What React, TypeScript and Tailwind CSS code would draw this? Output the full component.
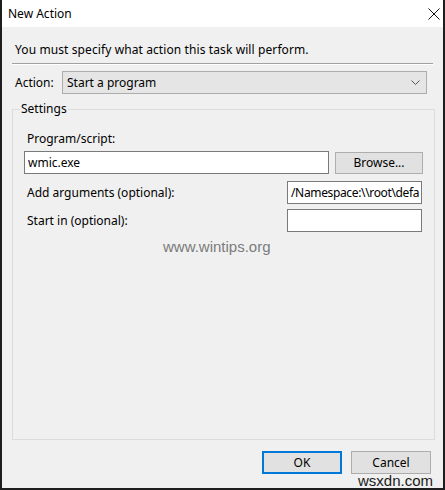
import React from 'react';

const ui = { fontFamily: '"Segoe UI", "Noto Sans", "Liberation Sans", sans-serif' };

function CloseIcon() {
  return (
    <svg width="12" height="12" viewBox="0 0 12 12" className="block">
      <path d="M0.5 0.5 L11.5 11.5 M11.5 0.5 L0.5 11.5" stroke="#111" strokeWidth="1" fill="none" />
    </svg>
  );
}

function Chevron() {
  return (
    <svg width="9" height="6" viewBox="0 0 9 6" className="block">
      <path d="M0.5 0.5 L4.5 4.5 L8.5 0.5" stroke="#555" strokeWidth="1" fill="none" />
    </svg>
  );
}

function TextBox({ value, className }: { value?: string; className: string }) {
  return (
    <div
      className={`h-[23px] bg-white border border-[#7a7a7a] flex items-center px-[3px] overflow-hidden whitespace-nowrap text-[12px] text-black ${className}`}
    >
      {value}
    </div>
  );
}

function Button({ label, primary, className }: { label: string; primary?: boolean; className: string }) {
  return (
    <div
      className={`h-[22px] flex items-center justify-center text-[12px] text-black bg-[#e1e1e1] ${
        primary ? 'border-2 border-[#0078d7]' : 'border border-[#adadad]'
      } ${className}`}
    >
      {label}
    </div>
  );
}

export default function App() {
  return (
    <div
      style={ui}
      className="w-[445px] h-[490px] flex flex-col bg-[#f0f0f0] border-x-2 border-b-2 border-[#1e1e1e] overflow-hidden text-[12px] text-black"
    >
      {/* Title bar */}
      <div className="h-[27px] bg-white flex items-center justify-between pl-[6px] pr-[3px] shrink-0">
        <span className="text-[12px] leading-none">New Action</span>
        <CloseIcon />
      </div>

      <div className="flex-1 flex flex-col px-[10px]">
        <p className="mt-[15px] pl-[3px] leading-[16px] tracking-[0.1px]">
          You must specify what action this task will perform.
        </p>
        <div className="mt-[5px] h-[2px] border-t border-[#a0a0a0] border-b border-b-white" />

        {/* Action picker */}
        <div className="mt-[6px] flex items-center">
          <span className="pl-[3px] w-[50px]">Action:</span>
          <div className="w-[365px] h-[23px] bg-[#e5e5e5] border border-[#adadad] flex items-center justify-between pl-[4px] pr-[6px]">
            <span>Start a program</span>
            <Chevron />
          </div>
        </div>

        {/* Settings group */}
        <fieldset className="mt-[8px] h-[338px] border border-[#dcdcdc] px-[11px] pb-0">
          <legend className="-ml-[4px] px-[1px] leading-[14px]">Settings</legend>

          <div className="mt-[15px] pl-[3px] leading-[16px]">Program/script:</div>
          <div className="mt-[4px] flex items-center">
            <TextBox value="wmic.exe" className="w-[305px]" />
            <Button label="Browse..." className="ml-[6px] w-[88px] h-[22px]" />
          </div>

          <div className="mt-[7px] flex items-center justify-between pr-[1px]">
            <span className="pl-[3px]">Add arguments (optional):</span>
            <TextBox value="/Namespace:\\root\defa" className="w-[135px] tracking-[-0.35px]" />
          </div>
          <div className="mt-[5px] flex items-center justify-between pr-[1px]">
            <span className="pl-[3px]">Start in (optional):</span>
            <TextBox className="w-[135px]" />
          </div>

          <div
            className="mt-[6px] pl-[139px] text-[15px] leading-[18px] text-[#7b7b7b]"
            style={{ fontFamily: '"Liberation Sans", Arial, sans-serif' }}
          >
            www.wintips.org
          </div>
        </fieldset>

        {/* Dialog buttons */}
        <div className="mt-[11px] flex justify-end gap-[9px] pr-[2px]">
          <Button label="OK" primary className="w-[80px] h-[23px]" />
          <Button label="Cancel" className="w-[80px] h-[23px]" />
        </div>
        <div
          className="flex justify-end text-[15px] leading-[14px] text-[#1a1a1a]"
          style={{ fontFamily: '"Liberation Sans", Arial, sans-serif' }}
        >
          wsxdn.com
        </div>
      </div>
    </div>
  );
}
